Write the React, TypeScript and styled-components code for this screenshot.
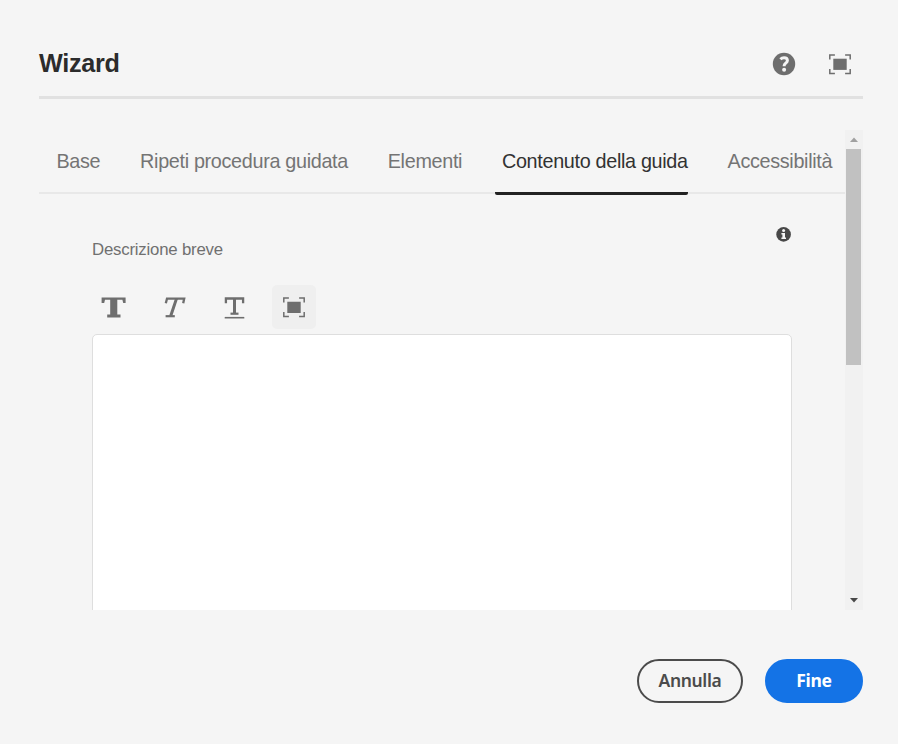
import React from "react";
import styled, { createGlobalStyle, css } from "styled-components";

const GlobalStyle = createGlobalStyle`
  * { box-sizing: border-box; }
  body {
    margin: 0;
    background: #f5f5f5;
    font-family: "Liberation Sans", Arial, sans-serif;
  }
`;

const Dialog = styled.main`
  display: flex;
  flex-direction: column;
  width: 898px;
  height: 744px;
  padding: 0 35px 0 39px;
  background: #f5f5f5;
  overflow: hidden;
`;

const Header = styled.header`
  display: flex;
  flex: none;
  align-items: center;
  height: 99px;
  padding: 32px 11px 0 0;
  border-bottom: 3px solid #e1e1e1;
`;

const Title = styled.h1`
  flex: 1;
  margin: 0;
  padding-bottom: 2px;
  font-size: 25.2px;
  line-height: 30px;
  font-weight: 700;
  letter-spacing: -0.3px;
  color: #2c2c2c;
`;

const HeaderActions = styled.div`
  display: flex;
  align-items: center;
  gap: 32.5px;
`;

const IconButton = styled.button<{ $selected?: boolean }>`
  display: flex;
  align-items: center;
  justify-content: center;
  padding: 0;
  border: 0;
  border-radius: 5px;
  color: #6e6e6e;
  background: ${({ $selected }) => ($selected ? "#efefef" : "transparent")};
`;

const ToolButton = styled(IconButton)`
  width: 44px;
  height: 44px;
`;

const Viewport = styled.div`
  display: flex;
  flex: none;
  height: 480px;
  margin-top: 31px;
  overflow: hidden;
`;

const Content = styled.div`
  flex: 1;
  min-width: 0;
`;

const TabList = styled.nav`
  display: flex;
  height: 65px;
  padding-left: 10.2px;
  gap: 32.5px;
  background: linear-gradient(#e8e8e8, #e8e8e8) 0 62px / 100% 2px no-repeat;
`;

const Tab = styled.button<{ $active?: boolean }>`
  flex: none;
  height: 65px;
  padding: 0 0 0 7.3px;
  border: 0;
  border-bottom: 3px solid transparent;
  background: transparent;
  font: 19.8px/58px "Liberation Sans", Arial, sans-serif;
  letter-spacing: -0.32px;
  white-space: nowrap;
  color: #747474;
  ${({ $active }) =>
    $active &&
    css`
      color: #323232;
      border-radius: 2px;
      background: linear-gradient(#222, #222) 0 100% / 100% 3px no-repeat border-box;
    `}
`;

const Panel = styled.section`
  padding: 32px 53px 0;
`;

const FieldHeader = styled.div`
  display: flex;
  justify-content: space-between;
  height: 58px;
`;

const Label = styled.label`
  padding-top: 13px;
  font-size: 16.8px;
  line-height: 20px;
  letter-spacing: -0.2px;
  color: #707070;
`;

const Toolbar = styled.div`
  display: flex;
  gap: 16px;
  height: 49px;
  margin-left: -0.4px;
`;

const Editor = styled.div`
  height: 360px;
  border: 1px solid #dedede;
  border-radius: 5px;
  background: #fff;
`;

const ScrollTrack = styled.div`
  display: flex;
  flex-direction: column;
  align-items: center;
  width: 18px;
  padding-right: 1px;
  background: #f1f1f1;
`;

const ScrollArrow = styled.div<{ $down?: boolean }>`
  display: flex;
  align-items: center;
  justify-content: center;
  height: 19px;
  margin-top: ${({ $down }) => ($down ? "auto" : "0")};
  color: ${({ $down }) => ($down ? "#484848" : "#a0a0a0")};
`;

const ScrollThumb = styled.div`
  width: 15px;
  height: 216px;
  background: #c1c1c1;
`;

const Footer = styled.footer`
  display: flex;
  justify-content: flex-end;
  gap: 22px;
  padding-top: 49px;
`;

const ActionButton = styled.button<{ $primary?: boolean }>`
  width: ${({ $primary }) => ($primary ? "98px" : "106px")};
  height: 44px;
  padding: 0;
  border: 2px solid ${({ $primary }) => ($primary ? "#1473e6" : "#4b4b4b")};
  border-radius: 22px;
  background: ${({ $primary }) => ($primary ? "#1473e6" : "transparent")};
  color: ${({ $primary }) => ($primary ? "#fff" : "#4b4b4b")};
  font: ${({ $primary }) => ($primary ? 700 : 600)} 17.5px/38px "Noto Sans", sans-serif;
  letter-spacing: -0.35px;
  padding-bottom: 2px;
`;

const HelpIcon = () => (
  <svg width="24" height="24" viewBox="0 0 24 24">
    <circle cx="12" cy="12" r="11.2" fill="currentColor" />
    <path d="M8.4 7.2C9.5 6.1 10.7 5.7 12 5.7c2 0 3.4 1 3.4 2.8 0 2.5-3.2 2.7-3.2 5.1v.7" fill="none" stroke="#f5f5f5" strokeWidth="3" />
    <circle cx="12.1" cy="17.8" r="2" fill="#f5f5f5" />
  </svg>
);

const FullScreenIcon = () => (
  <svg width="24" height="24" viewBox="0 -0.3 24 24">
    <path d="M1.8 7.2V2.8h5.1M17.1 2.8h5.1v4.4M22.2 16.8v4.4h-5.1M6.9 21.2H1.8v-4.4" fill="none" stroke="currentColor" strokeWidth="1.5" />
    <path d="M5.3 6.4h13.4v11.2h-13.4z" fill="currentColor" />
  </svg>
);

const InfoIcon = () => (
  <svg width="16" height="16" viewBox="0.4 0.6 16 16">
    <circle cx="8" cy="8" r="7.3" fill="#484848" />
    <circle cx="8" cy="4.2" r="1.5" fill="#f5f5f5" />
    <path d="M5.8 6.5h3.6v4.6h1v1.6H5.8v-1.6h1V8.1h-1z" fill="#f5f5f5" />
  </svg>
);

const BoldIcon = () => (
  <svg width="26" height="24" viewBox="0.4 -0.4 26 24" fill="currentColor">
    <path d="M1 2h24v5.6h-2.4L21.8 4.4h-5.1v14.8h3.2V22H6.6v-2.8h3V4.4H4.4l-.8 3.2H1z" />
  </svg>
);

const ItalicIcon = () => (
  <svg width="24" height="24" viewBox="-0.6 -0.4 24 24" fill="none" stroke="currentColor">
    <path d="M3.2 7.8L4.4 3.2h17.2l-1 4.6" strokeWidth="2.3" />
    <path d="M13.9 3.2L8.1 20.6" strokeWidth="3" />
    <path d="M3 20.8h9.2" strokeWidth="2.2" />
  </svg>
);

const UnderlineIcon = () => (
  <svg width="24" height="24" viewBox="-0.5 -0.4 24 24" fill="none" stroke="currentColor">
    <path d="M3.4 7.8V3.1h17.2v4.7" strokeWidth="2.3" />
    <path d="M12 3.1v15" strokeWidth="3" />
    <path d="M8 18.3h8" strokeWidth="2.2" />
    <path d="M2.2 22.3h19.6" strokeWidth="1.6" />
  </svg>
);

const Arrow = ({ down = false }: { down?: boolean }) => (
  <svg width="8" height="5" viewBox="0 0 8 5" fill="currentColor">
    <path d={down ? "M0 0h8L4 4.5z" : "M0 5h8L4 0.5z"} />
  </svg>
);

const tabs = ["Base", "Ripeti procedura guidata", "Elementi", "Contenuto della guida", "Accessibilità"];

export default function App() {
  return (
    <>
      <GlobalStyle />
      <Dialog>
        <Header>
          <Title>Wizard</Title>
          <HeaderActions>
            <IconButton aria-label="Guida"><HelpIcon /></IconButton>
            <IconButton aria-label="Schermo intero"><FullScreenIcon /></IconButton>
          </HeaderActions>
        </Header>
        <Viewport>
          <Content>
            <TabList>
              {tabs.map((tab, i) => (
                <Tab key={tab} $active={i === 3}>{tab}</Tab>
              ))}
            </TabList>
            <Panel>
              <FieldHeader>
                <Label>Descrizione breve</Label>
                <InfoIcon />
              </FieldHeader>
              <Toolbar>
                <ToolButton aria-label="Grassetto"><BoldIcon /></ToolButton>
                <ToolButton aria-label="Corsivo"><ItalicIcon /></ToolButton>
                <ToolButton aria-label="Sottolineato"><UnderlineIcon /></ToolButton>
                <ToolButton $selected aria-label="Schermo intero"><FullScreenIcon /></ToolButton>
              </Toolbar>
              <Editor />
            </Panel>
          </Content>
          <ScrollTrack>
            <ScrollArrow><Arrow /></ScrollArrow>
            <ScrollThumb />
            <ScrollArrow $down><Arrow down /></ScrollArrow>
          </ScrollTrack>
        </Viewport>
        <Footer>
          <ActionButton>Annulla</ActionButton>
          <ActionButton $primary>Fine</ActionButton>
        </Footer>
      </Dialog>
    </>
  );
}
